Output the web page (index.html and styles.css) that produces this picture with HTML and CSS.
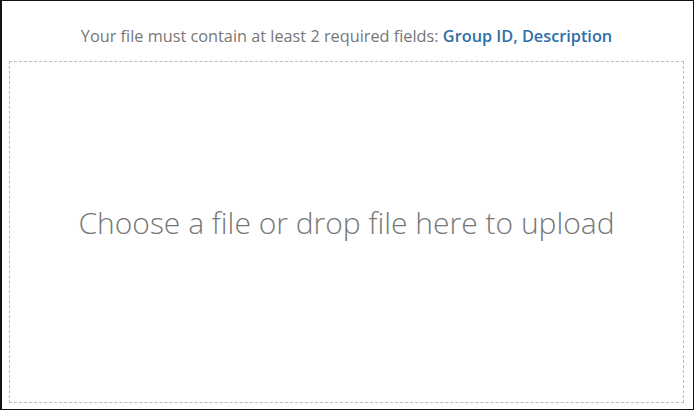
FILE: index.html
```html
<!DOCTYPE html>
<html lang="en">
<head>
  <meta charset="UTF-8">
  <title>Upload</title>
  <link rel="stylesheet" href="styles.css">
</head>
<body>
  <div class="frame">
    <div class="hint">
      Your file must contain at least 2 required fields: <span class="fields">Group ID, Description</span>
    </div>
    <div class="drop">
      <span class="drop-text">Choose a file or drop file here to upload</span>
    </div>
  </div>
</body>
</html>
```

FILE: styles.css
```css
body {
  margin: 0;
  padding: 0;
  background: #fff;
  font-family: "Open Sans", "Liberation Sans", sans-serif;
}

.frame {
  width: 694px;
  height: 410px;
  box-sizing: border-box;
  border: 1px solid #111;
  border-left-width: 2px;
  padding: 24px 9px 6px 7px;
  display: flex;
  flex-direction: column;
}

.hint {
  text-align: center;
  font-size: 16.3px;
  line-height: 22px;
  color: #777;
  margin-bottom: 14px;
}

.fields {
  color: #2f6fa7;
  font-weight: 600;
}

.drop {
  flex: 1;
  border: 1px dashed #bbb;
  display: flex;
  align-items: center;
  justify-content: center;
  padding-bottom: 20px;
}

.drop-text {
  font-size: 30px;
  font-weight: 300;
  color: #777;
}
```
